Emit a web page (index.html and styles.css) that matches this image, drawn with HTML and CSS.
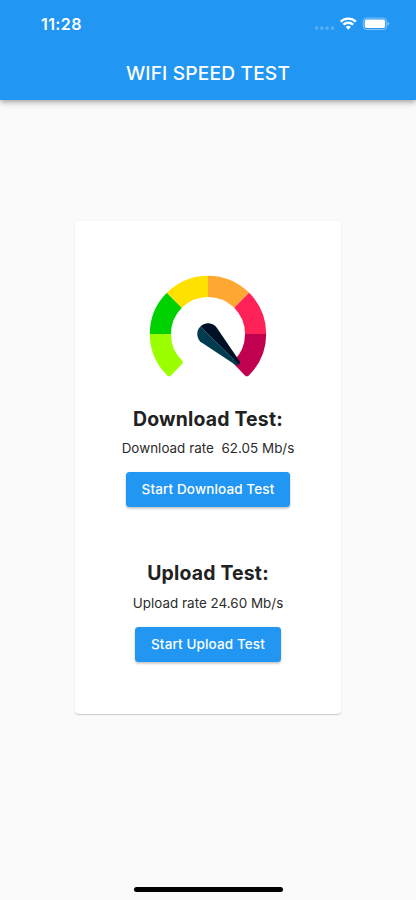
FILE: index.html
```html
<!DOCTYPE html>
<html lang="en">
<head>
<meta charset="utf-8">
<meta name="viewport" content="width=device-width, initial-scale=1">
<title>WIFI SPEED TEST</title>
<link rel="stylesheet" href="styles.css">
</head>
<body>
<header class="app-bar">
  <div class="status-bar">
    <span class="clock">11:28</span>
    <svg class="status-icons" width="76" height="16" viewBox="0 0 76 16" aria-hidden="true">
      <g fill="#fff" fill-opacity=".25">
        <rect x="1" y="11.6" width="3.2" height="3.2" rx="1"/>
        <rect x="6.3" y="11.6" width="3.2" height="3.2" rx="1"/>
        <rect x="11.6" y="11.6" width="3.2" height="3.2" rx="1"/>
        <rect x="16.9" y="11.6" width="3.2" height="3.2" rx="1"/>
      </g>
      <g fill="none" stroke="#fff" stroke-width="2.3">
        <path d="M26.7 6.7a11 11 0 0 1 15.2 0"/>
        <path d="M29.4 9.7a7.1 7.1 0 0 1 9.8 0"/>
      </g>
      <path fill="#fff" d="M31.7 12a3.9 3.9 0 0 1 5.2 0L34.3 14.8z"/>
      <rect x="49.2" y="3.1" width="23.4" height="11.4" rx="3.4" fill="none" stroke="#fff" stroke-opacity=".45"/>
      <rect x="50.7" y="4.6" width="20.4" height="8.4" rx="2" fill="#fff"/>
      <path fill="#fff" fill-opacity=".5" d="M73.7 6.8q1.4.5 1.4 2t-1.4 2z"/>
    </svg>
  </div>
  <h1 class="title">WIFI SPEED TEST</h1>
</header>
<main class="content">
  <section class="card">
    <svg class="gauge" width="118" height="104" viewBox="-59 -59 118 104" aria-hidden="true">
      <path fill="#9cff00" d="M-58.2 0H-37A37 37 0 0 0-25.7 26.8Q-24.3 28.3-25.7 29.8L-37 41.4Q-38.7 43.1-40.5 41.7A58.2 58.2 0 0 1-58.2 0Z"/>
      <path fill="#00d100" d="M-58.2 0A58.2 58.2 0 0 1-41.15-41.15L-26.16-26.16A37 37 0 0 0-37 0Z"/>
      <path fill="#ffe100" d="M-41.15-41.15A58.2 58.2 0 0 1 0-58.2V-37A37 37 0 0 0-26.16-26.16Z"/>
      <path fill="#ffa733" d="M0-58.2A58.2 58.2 0 0 1 41.15-41.15L26.16-26.16A37 37 0 0 0 0-37Z"/>
      <path fill="#ff2259" d="M41.15-41.15A58.2 58.2 0 0 1 58.2 0H37A37 37 0 0 0 26.16-26.16Z"/>
      <path fill="#c1004f" d="M58.2 0H37A37 37 0 0 1 25.7 26.8Q24.3 28.3 25.7 29.8L37 41.4Q38.7 43.1 40.5 41.7A58.2 58.2 0 0 0 58.2 0Z"/>
      <path fill="#003b4f" d="M-7.6-7.6A10.7 10.7 0 0 0-6.4 8.6L27.6 30.9Q29.7 32 31.1 30.6Z"/>
      <path fill="#001127" d="M-7.6-7.6A10.7 10.7 0 0 1 8.6-6.4L31.6 27.2Q32.7 29.2 31.1 30.6Z"/>
    </svg>
    <div class="test">
      <h2 class="heading">Download Test:</h2>
      <p class="rate">Download rate&nbsp; 62.05 Mb/s</p>
      <button class="button download">Start Download Test</button>
    </div>
    <div class="test">
      <h2 class="heading">Upload Test:</h2>
      <p class="rate">Upload rate 24.60 Mb/s</p>
      <button class="button upload">Start Upload Test</button>
    </div>
  </section>
</main>
<footer class="home-area"><div class="home-indicator"></div></footer>
</body>
</html>
```
FILE: styles.css
```css
* { box-sizing: border-box; }

body {
  margin: 0;
  height: 900px;
  display: flex;
  flex-direction: column;
  background: #fafafa;
  color: #212121;
  font-family: Inter, "Liberation Sans", sans-serif;
}

h1, h2, p { margin: 0; }

.app-bar {
  height: 100px;
  flex: none;
  background: #2196f3;
  color: #fff;
  box-shadow: 0 2px 4px -1px rgba(0, 0, 0, .2), 0 4px 5px rgba(0, 0, 0, .14), 0 1px 10px rgba(0, 0, 0, .06);
}

.status-bar {
  height: 46px;
  padding: 15px 26px 0 41px;
  display: flex;
  justify-content: space-between;
}

.clock {
  font-size: 16px;
  line-height: 18px;
  font-weight: 600;
  letter-spacing: .4px;
}

.title {
  height: 54px;
  line-height: 54px;
  text-align: center;
  font-size: 19.2px;
  font-weight: 500;
  letter-spacing: .15px;
}

.content {
  flex: 1;
  padding-top: 121px;
}

.card {
  width: 266px;
  height: 493px;
  margin: 0 auto;
  padding-top: 53.5px;
  display: flex;
  flex-direction: column;
  align-items: center;
  background: #fff;
  border-radius: 4px;
  box-shadow: 0 1px 1px rgba(0, 0, 0, .18), 0 0 2px rgba(0, 0, 0, .07);
}

.gauge { flex: none; }

.test {
  height: 154.9px;
  flex: none;
  padding-top: 28px;
  display: flex;
  flex-direction: column;
  align-items: center;
}

.heading {
  font-size: 19.4px;
  line-height: 24px;
  font-weight: 700;
  letter-spacing: .2px;
}

.rate {
  margin-top: 8.4px;
  font-size: 13.4px;
  line-height: 18px;
  letter-spacing: .03px;
  color: #2b2b2b;
}

.button {
  height: 35px;
  margin-top: 15px;
  padding: 0;
  border: 0;
  border-radius: 3.5px;
  background: #2196f3;
  color: #fff;
  font: 500 13.5px/35px Inter, sans-serif;
  letter-spacing: .12px;
  box-shadow: 0 2px 2px rgba(0, 0, 0, .12), 0 1px 3px rgba(0, 0, 0, .14);
}

.download { width: 164px; }
.upload { width: 145.5px; }

.home-area {
  height: 17px;
  display: flex;
  justify-content: center;
  padding-top: 4px;
}

.home-indicator {
  width: 149px;
  height: 5px;
  border-radius: 3px;
  background: #000;
}
```
